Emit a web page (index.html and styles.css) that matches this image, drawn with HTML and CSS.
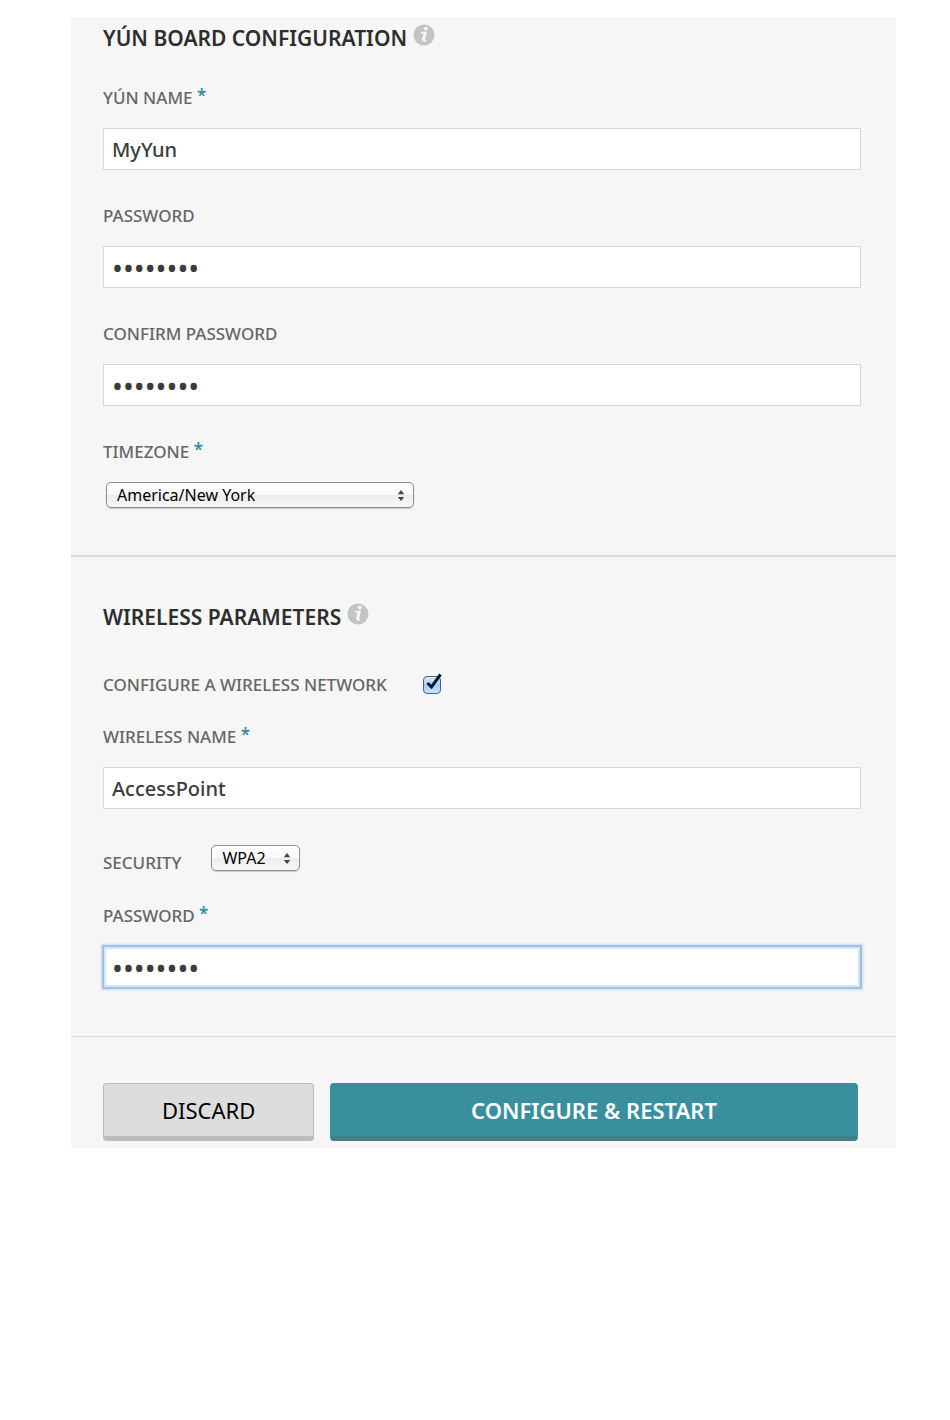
FILE: index.html
```html
<!DOCTYPE html>
<html lang="en">
<head>
<meta charset="utf-8">
<meta name="viewport" content="width=device-width, initial-scale=1">
<title>Yún Board Configuration</title>
<link rel="stylesheet" href="styles.css">
</head>
<body>
<form class="panel">
  <section class="section section-board">
    <h2 class="heading">YÚN BOARD CONFIGURATION
      <svg class="info" viewBox="0 0 22 22" aria-hidden="true"><circle cx="11" cy="11" r="10.5" fill="#c4c4c4"/><circle cx="12.8" cy="4.6" r="1.9" fill="#f6f6f6"/><path d="M8 8.6h4.9l-2 7.6q-.3 1.2 2.1.2M11.6 9L9.6 16.4" fill="none" stroke="#f6f6f6" stroke-width="1.8"/></svg>
    </h2>
    <div class="field">
      <label class="label" for="name">YÚN NAME <span class="req">*</span></label>
      <input class="input" id="name" type="text" value="MyYun">
    </div>
    <div class="field">
      <label class="label" for="pass">PASSWORD</label>
      <input class="input secret" id="pass" type="password" value="password">
    </div>
    <div class="field">
      <label class="label" for="confirm">CONFIRM PASSWORD</label>
      <input class="input secret" id="confirm" type="password" value="password">
    </div>
    <div class="field">
      <label class="label" for="zone">TIMEZONE <span class="req">*</span></label>
      <span class="picker picker-zone">
        <select class="select" id="zone"><option>America/New York</option></select>
        <svg class="arrows" viewBox="0 0 8 12" aria-hidden="true"><path d="M4 0l3.5 4.5h-7zM4 12l3.5-4.5h-7z" fill="#444"/></svg>
      </span>
    </div>
  </section>

  <section class="section section-wireless">
    <h2 class="heading">WIRELESS PARAMETERS
      <svg class="info" viewBox="0 0 22 22" aria-hidden="true"><circle cx="11" cy="11" r="10.5" fill="#c4c4c4"/><circle cx="12.8" cy="4.6" r="1.9" fill="#f6f6f6"/><path d="M8 8.6h4.9l-2 7.6q-.3 1.2 2.1.2M11.6 9L9.6 16.4" fill="none" stroke="#f6f6f6" stroke-width="1.8"/></svg>
    </h2>
    <div class="row row-check">
      <label class="label" for="enable">CONFIGURE A WIRELESS NETWORK</label>
      <span class="check">
        <input class="checkbox" id="enable" type="checkbox" checked>
        <svg class="tick" viewBox="0 0 20 20" aria-hidden="true"><path d="M4.5 10l4 4L17.5 1.5" fill="none" stroke="#0b1a33" stroke-width="3"/></svg>
      </span>
    </div>
    <div class="field">
      <label class="label" for="ssid">WIRELESS NAME <span class="req">*</span></label>
      <input class="input" id="ssid" type="text" value="AccessPoint">
    </div>
    <div class="row row-security">
      <label class="label" for="security">SECURITY</label>
      <span class="picker picker-security">
        <select class="select" id="security"><option>WPA2</option></select>
        <svg class="arrows" viewBox="0 0 8 12" aria-hidden="true"><path d="M4 0l3.5 4.5h-7zM4 12l3.5-4.5h-7z" fill="#444"/></svg>
      </span>
    </div>
    <div class="field">
      <label class="label" for="key">PASSWORD <span class="req">*</span></label>
      <input class="input secret active" id="key" type="password" value="password">
    </div>
  </section>

  <div class="actions">
    <button class="button discard" type="reset">DISCARD</button>
    <button class="button submit" type="submit">CONFIGURE &amp; RESTART</button>
  </div>
</form>
</body>
</html>
```
FILE: styles.css
```css
* {
  box-sizing: border-box;
}

body {
  margin: 0;
  padding: 17px 54px 0 71px;
  background: #fff;
  font-family: "Noto Sans", "Open Sans", sans-serif;
}

.panel {
  background: #f6f6f6;
}

.section {
  display: flex;
  flex-direction: column;
  padding: 0 35px 47px 32px;
  border-bottom: 1px solid #dadada;
}

.section-board {
  padding-top: 9px;
  border-bottom-width: 2px;
}

.section-wireless {
  padding-top: 48px;
  padding-bottom: 48px;
}

.heading {
  display: flex;
  align-items: flex-start;
  gap: 6px;
  margin: 0 0 36px;
  color: #2e2e2e;
  font-size: 21px;
  font-weight: 600;
  line-height: 24px;
}

.section-wireless .heading {
  margin-bottom: 44px;
}

.info {
  width: 22px;
  height: 22px;
  margin-top: -2px;
}

.field {
  display: flex;
  flex-direction: column;
  gap: 18px;
}

.field + .field {
  margin-top: 34px;
}

.label {
  color: #666;
  font-size: 17px;
  font-weight: 500;
  line-height: 24px;
}

.req {
  color: #3a8f9f;
  font-weight: 600;
  line-height: 1;
  vertical-align: 2px;
}

.input {
  width: 100%;
  height: 42px;
  padding: 0 8px;
  border: 1px solid #d8d8d8;
  border-radius: 0;
  background: #fff;
  color: #3c3c3c;
  font-family: inherit;
  font-size: 20px;
  font-weight: 500;
}

.secret {
  font-size: 29px;
  font-weight: 400;
}

.active {
  border-color: #8fb0d8;
  outline: 2px solid #a3c0e2;
  outline-offset: -1px;
  box-shadow: inset 0 0 0 2px #d3e6f8, 0 0 2px 2px #c9daee;
}

.picker {
  position: relative;
  display: block;
  height: 26px;
}

.picker-zone {
  width: 308px;
  margin-left: 3px;
}

.picker-security {
  width: 89px;
}

.select {
  width: 100%;
  height: 100%;
  padding: 0 10px;
  border: 1px solid #8f8f8f;
  border-radius: 5px;
  appearance: none;
  background: linear-gradient(#fff, #fafafa 50%, #ededed 51%, #f7f7f7);
  box-shadow: 0 1px 1px #ccc;
  color: #000;
  font-family: inherit;
  font-size: 16px;
  font-weight: 400;
}

.arrows {
  position: absolute;
  top: 8px;
  right: 9px;
  width: 8px;
  height: 11px;
  pointer-events: none;
}

.row {
  display: flex;
}

.row-check {
  gap: 36px;
  align-items: center;
  margin-bottom: 28px;
}

.check {
  position: relative;
  display: block;
  width: 18px;
  height: 18px;
}

.checkbox {
  display: block;
  width: 18px;
  height: 18px;
  margin: 0;
  border: 1px solid #47648f;
  border-radius: 4px;
  appearance: none;
  background: linear-gradient(#dcebfb, #a9cdf2 50%, #c5e2fb);
}

.tick {
  position: absolute;
  top: -3px;
  left: 0;
  width: 20px;
  height: 20px;
  pointer-events: none;
}

.row-security {
  gap: 30px;
  align-items: flex-start;
  margin: 36px 0 29px;
}

.row-security .label {
  padding-top: 6px;
}

.actions {
  display: grid;
  grid-template-columns: 2fr 5fr;
  gap: 16px;
  padding: 46px 38px 7px 32px;
}

.button {
  height: 58px;
  padding: 0 12px;
  border: 1px solid #bcbcbc;
  border-bottom-width: 5px;
  border-radius: 4px;
  font-family: inherit;
  font-size: 22px;
}

.discard {
  background: #ddd;
  color: #000;
  font-weight: 400;
}

.submit {
  border-color: #3a8f9f #3a8f9f #437f88;
  background: #3a8f9f;
  color: #fff;
  font-weight: 600;
}
```
